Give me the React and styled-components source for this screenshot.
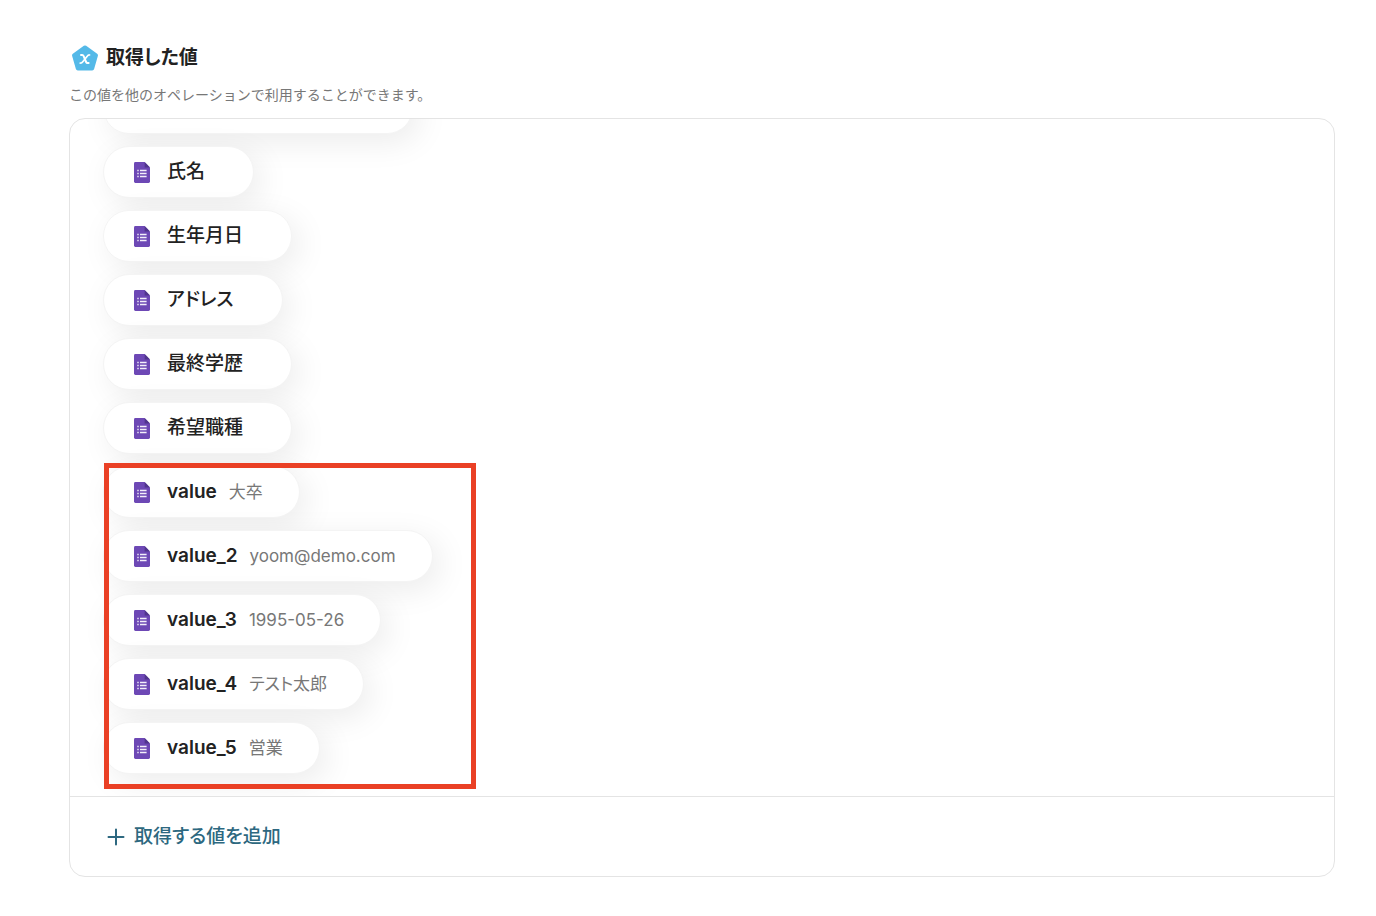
import React from "react";
import styled, { createGlobalStyle } from "styled-components";

const GlobalStyle = createGlobalStyle`
  *, *::before, *::after {
    box-sizing: border-box;
  }
  body {
    margin: 0;
    background: #ffffff;
    color: #222222;
    font-family: Inter, "Noto Sans CJK JP", sans-serif;
  }
`;

const Page = styled.main`
  padding: 44px 41px 39px 69px;
`;

const Header = styled.header`
  display: flex;
  align-items: center;
  gap: 7px;
  padding-left: 2px;
  height: 28px;
`;

const Title = styled.h1`
  margin: 0;
  font-size: 19px;
  line-height: 28px;
  font-weight: 600;
  font-feature-settings: "palt";
`;

const Description = styled.p`
  margin: 13px 0;
  font-size: 14px;
  line-height: 20px;
  color: #777777;
`;

const Panel = styled.section`
  border: 1px solid #e4e4e4;
  border-radius: 16px;
  overflow: hidden;
`;

const ScrollArea = styled.div`
  display: flex;
  flex-direction: column;
  justify-content: flex-end;
  gap: 12px;
  max-height: 677px;
  padding: 0 33px 22px;
  overflow: hidden;
`;

const ValueList = styled.ul`
  display: flex;
  flex-direction: column;
  align-items: flex-start;
  gap: 12px;
  margin: 0;
  padding: 0;
  list-style: none;
`;

const HighlightGroup = styled.div`
  position: relative;
`;

const Highlight = styled.div`
  position: absolute;
  top: -3px;
  bottom: -15px;
  left: 1px;
  width: 372px;
  border: 5px solid #ea4025;
  pointer-events: none;
`;

const Pill = styled.li`
  display: flex;
  align-items: center;
  height: 52px;
  min-width: ${({ $wide }) => ($wide ? "310px" : "0")};
  padding: 0 36px 0 30px;
  border: 1px solid #f4f4f4;
  border-radius: 26px;
  background: #ffffff;
  box-shadow: 7px 8px 32px rgba(0, 0, 0, 0.08);
  white-space: nowrap;
  font-feature-settings: "palt";
`;

const Label = styled.span`
  margin: 0 12px 0 17px;
  font-size: 19px;
  line-height: 28px;
  font-weight: ${({ $medium }) => ($medium ? 500 : 600)};
`;

const Sample = styled.span`
  font-size: 17px;
  line-height: 28px;
  color: #777777;
`;

const Footer = styled.footer`
  display: flex;
  align-items: center;
  height: 80px;
  padding: 0 37px;
  border-top: 1px solid #e4e4e4;
`;

const AddButton = styled.button`
  display: flex;
  align-items: center;
  gap: 9px;
  padding: 0;
  border: 0;
  background: none;
  color: #2d6880;
  font: inherit;
  font-size: 19px;
  line-height: 28px;
  font-weight: 500;
  font-feature-settings: "palt";
  cursor: pointer;
`;

const BadgeIcon = () => (
  <svg width="28" height="28" viewBox="0 0 28 28" aria-hidden="true">
    <path
      d="M14 3.5 L25 11.3 L21.2 24.5 H6.8 L3 11.3 Z"
      fill="#54b9e8"
      stroke="#54b9e8"
      strokeWidth="4"
      strokeLinejoin="round"
    />
    <path
      d="M10 11 H11.200 Q12.200 11 12.600 12 L15.100 18 Q15.500 19 16.500 19 H17.600"
      fill="none"
      stroke="#ffffff"
      strokeWidth="2"
      strokeLinecap="round"
    />
    <path
      d="M18.600 11 Q17.200 10.800 16.200 12.200 L11.800 17.800 Q10.700 19.200 9.200 19"
      fill="none"
      stroke="#ffffff"
      strokeWidth="1.700"
      strokeLinecap="round"
    />
  </svg>
);

const FormIcon = () => (
  <svg width="16" height="21" viewBox="0 0 16 21" aria-hidden="true">
    <path
      d="M1.400 0 H10.600 L16 5.400 V19.600 Q16 21 14.600 21 H1.400 Q0 21 0 19.600 V1.400 Q0 0 1.400 0 Z"
      fill="#6d48b5"
    />
    <path d="M10.600 0 L16 5.400 H10.600 Z" fill="#50358c" />
    <path
      d="M3.300 8.500 H4.700 M3.300 11.500 H4.700 M3.300 14.500 H4.700 M6 8.500 H12.600 M6 11.500 H12.600 M6 14.500 H12.600"
      stroke="#f3effa"
      strokeWidth="1.400"
    />
  </svg>
);

const PlusIcon = () => (
  <svg width="18" height="18" viewBox="0 0 18 18" aria-hidden="true">
    <path
      d="M9 1.500 V16.500 M1.500 9 H16.500"
      stroke="currentColor"
      strokeWidth="2"
      strokeLinecap="round"
    />
  </svg>
);

const fields = ["氏名", "生年月日", "アドレス", "最終学歴", "希望職種"];

const extracted = [
  { label: "value", sample: "大卒" },
  { label: "value_2", sample: "yoom@demo.com" },
  { label: "value_3", sample: "1995-05-26" },
  { label: "value_4", sample: "テスト太郎" },
  { label: "value_5", sample: "営業" },
];

export default function App() {
  return (
    <>
      <GlobalStyle />
      <Page>
        <Header>
          <BadgeIcon />
          <Title>取得した値</Title>
        </Header>
        <Description>
          この値を他のオペレーションで利用することができます。
        </Description>
        <Panel>
          <ScrollArea>
            <ValueList>
              <Pill $wide>
                <FormIcon />
              </Pill>
              {fields.map((label) => (
                <Pill key={label}>
                  <FormIcon />
                  <Label $medium>{label}</Label>
                </Pill>
              ))}
            </ValueList>
            <HighlightGroup>
              <ValueList>
                {extracted.map(({ label, sample }) => (
                  <Pill key={label}>
                    <FormIcon />
                    <Label>{label}</Label>
                    <Sample>{sample}</Sample>
                  </Pill>
                ))}
              </ValueList>
              <Highlight />
            </HighlightGroup>
          </ScrollArea>
          <Footer>
            <AddButton type="button">
              <PlusIcon />
              取得する値を追加
            </AddButton>
          </Footer>
        </Panel>
      </Page>
    </>
  );
}
